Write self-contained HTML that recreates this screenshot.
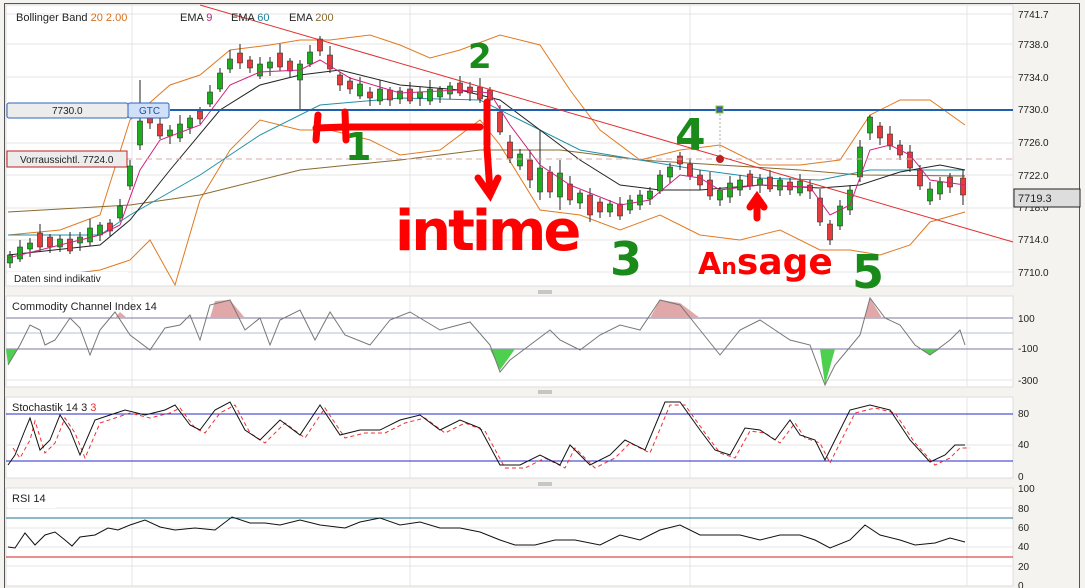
<!DOCTYPE html>
<html><head><meta charset="utf-8">
<style>
body{margin:0;background:#f4f3ef;width:1085px;height:588px;overflow:hidden;font-family:"Liberation Sans",sans-serif}
svg{display:block}
</style></head><body>
<svg width="1085" height="588" viewBox="0 0 1085 588" xmlns="http://www.w3.org/2000/svg" font-family="Liberation Sans, sans-serif">
<rect width="1085" height="588" fill="#f4f3ef"/>
<line x1="4.5" y1="3" x2="4.5" y2="588" stroke="#555"/>
<line x1="4" y1="3.5" x2="1080" y2="3.5" stroke="#555"/>
<line x1="1079.5" y1="3" x2="1079.5" y2="588" stroke="#555"/>
<rect x="6" y="5" width="1007" height="281" fill="#fff" stroke="#dcdcdc"/>
<rect x="6" y="296" width="1007" height="91" fill="#fff" stroke="#dcdcdc"/>
<rect x="6" y="397" width="1007" height="81" fill="#fff" stroke="#dcdcdc"/>
<rect x="6" y="488" width="1007" height="98" fill="#fff" stroke="#dcdcdc"/>
<g stroke="#e4e4e4">
<line x1="132" y1="5" x2="132" y2="286"/><line x1="410" y1="5" x2="410" y2="286"/><line x1="690" y1="5" x2="690" y2="286"/><line x1="967" y1="5" x2="967" y2="286"/>
<line x1="132" y1="296" x2="132" y2="387"/><line x1="410" y1="296" x2="410" y2="387"/><line x1="690" y1="296" x2="690" y2="387"/><line x1="967" y1="296" x2="967" y2="387"/>
<line x1="132" y1="397" x2="132" y2="478"/><line x1="410" y1="397" x2="410" y2="478"/><line x1="690" y1="397" x2="690" y2="478"/><line x1="967" y1="397" x2="967" y2="478"/>
<line x1="132" y1="488" x2="132" y2="586"/><line x1="410" y1="488" x2="410" y2="586"/><line x1="690" y1="488" x2="690" y2="586"/><line x1="967" y1="488" x2="967" y2="586"/>
<line x1="6" y1="14" x2="1013" y2="14"/><line x1="6" y1="44" x2="1013" y2="44"/><line x1="6" y1="77" x2="1013" y2="77"/><line x1="6" y1="143" x2="1013" y2="143"/><line x1="6" y1="175" x2="1013" y2="175"/><line x1="6" y1="208" x2="1013" y2="208"/><line x1="6" y1="240" x2="1013" y2="240"/><line x1="6" y1="272" x2="1013" y2="272"/>
<line x1="6" y1="380" x2="1013" y2="380"/>
<line x1="6" y1="445" x2="1013" y2="445"/>
<line x1="6" y1="508" x2="1013" y2="508"/><line x1="6" y1="528" x2="1013" y2="528"/><line x1="6" y1="547" x2="1013" y2="547"/><line x1="6" y1="566" x2="1013" y2="566"/>
</g>
<g stroke="#999"><line x1="538" y1="291" x2="552" y2="291"/><line x1="538" y1="293" x2="552" y2="293"/><line x1="538" y1="391" x2="552" y2="391"/><line x1="538" y1="393" x2="552" y2="393"/><line x1="538" y1="483" x2="552" y2="483"/><line x1="538" y1="485" x2="552" y2="485"/></g>
<g font-size="10" fill="#222">
<text x="1018" y="18">7741.7</text><text x="1018" y="48">7738.0</text><text x="1018" y="81">7734.0</text><text x="1018" y="113">7730.0</text><text x="1018" y="146">7726.0</text><text x="1018" y="179">7722.0</text><text x="1018" y="211">7718.0</text><text x="1018" y="243">7714.0</text><text x="1018" y="276">7710.0</text>
<text x="1018" y="322">100</text><text x="1018" y="352">-100</text><text x="1018" y="384">-300</text>
<text x="1018" y="417">80</text><text x="1018" y="448">40</text><text x="1018" y="480">0</text>
<text x="1018" y="492">100</text><text x="1018" y="512">80</text><text x="1018" y="531">60</text><text x="1018" y="550">40</text><text x="1018" y="570">20</text><text x="1018" y="589">0</text>
</g>
<rect x="1014" y="189" width="66" height="18" fill="#ddd" stroke="#222"/>
<text x="1018" y="202" font-size="11" fill="#222">7719.3</text>

<g fill="none" stroke-width="1">
<polyline stroke="#e07a20" points="8,235 60,230 100,215 130,120 170,85 200,75 230,50 270,45 300,40 330,40 370,35 400,45 430,58 460,50 500,35 540,45 570,90 600,130 640,160 680,150 720,145 760,165 800,165 840,160 870,115 900,100 930,100 965,125"/>
<polyline stroke="#e07a20" points="8,275 60,275 100,270 130,260 150,240 175,285 200,200 230,150 260,120 300,130 330,130 370,140 400,155 440,150 480,120 500,145 540,210 580,215 620,230 660,215 700,235 740,240 780,230 820,250 850,250 880,255 910,245 930,222 965,212"/>
<polyline stroke="#8a6a30" points="8,212 130,205 200,195 300,170 400,160 480,150 560,150 640,160 720,165 800,170 860,175 965,176"/>
<polyline stroke="#2090a8" points="8,235 100,235 130,215 200,175 260,135 320,105 400,98 480,100 520,120 580,150 640,160 700,170 760,178 820,180 870,170 920,170 965,170"/>
<polyline stroke="#222" points="8,255 100,245 130,220 170,170 220,110 260,85 300,75 340,70 400,85 460,90 500,100 540,130 580,160 620,185 660,190 700,190 760,185 820,188 860,185 900,172 940,165 965,170"/>
</g>
<path stroke="#222" fill="none" d="M10 251V268M20 240V262M30 238V257M40 224V251M50 234V253M60 235V252M70 232V254M80 232V251M90 219V246M100 222V241M110 219V236M120 199V221M130 160V190M140 80V150M150 110V129M160 117V139M170 125V144M180 115V142M190 115V134M200 107V124M210 85V107M220 68V92M230 50V73M240 44V69M250 56V73M260 57V79M270 57V76M280 44V71M290 58V77M300 60V110M310 45V67M320 36V56M330 46V73M340 72V91M350 77V94M360 77V99M370 87V106M380 80V105M390 87V106M400 87V104M410 82V104M420 87V106M430 80V105M440 86V103M450 82V99M460 76V96M470 82V101M480 78V103M490 87V106M500 105V135M510 135V163M520 149V170M530 150V188M540 130V200M550 166V198M560 160V210M570 176V205M580 190V209M590 188V222M600 198V218M610 200V217M620 197V220M630 195V214M640 190V210M650 187V205M660 170V194M670 163V183M680 152V170M690 158V180M700 170V190M710 172V200M720 187V206M730 176V203M740 175V196M750 170V190M760 174V193M770 170V192M780 177V196M790 178V195M800 174V196M810 180V199M820 189V226M830 220V245M840 200V230M850 185V215M860 140V182M870 115V140M880 122V145M890 126V150M900 140V160M910 145V172M920 165V190M930 182V205M940 177V200M950 173V193M963 170V205"/>
<path fill="#1cae1c" stroke="#222" stroke-width="0.6" d="M7.5 255h5v8h-5zM17.5 247h5v12h-5zM27.5 243h5v6h-5zM57.5 239h5v8h-5zM77.5 237h5v6h-5zM87.5 228h5v14h-5zM97.5 225h5v10h-5zM117.5 206h5v12h-5zM127.5 166h5v20h-5zM137.5 121h5v24h-5zM167.5 130h5v6h-5zM177.5 124h5v14h-5zM187.5 118h5v10h-5zM207.5 92h5v12h-5zM217.5 73h5v16h-5zM227.5 59h5v10h-5zM257.5 64h5v12h-5zM267.5 62h5v6h-5zM297.5 64h5v16h-5zM307.5 52h5v12h-5zM357.5 84h5v12h-5zM377.5 89h5v12h-5zM397.5 91h5v8h-5zM417.5 92h5v6h-5zM427.5 89h5v12h-5zM437.5 89h5v8h-5zM447.5 86h5v8h-5zM517.5 154h5v12h-5zM537.5 168h5v24h-5zM557.5 173h5v24h-5zM577.5 193h5v10h-5zM607.5 204h5v8h-5zM627.5 200h5v10h-5zM637.5 195h5v10h-5zM647.5 191h5v8h-5zM657.5 175h5v16h-5zM667.5 167h5v10h-5zM717.5 190h5v10h-5zM727.5 183h5v14h-5zM737.5 180h5v10h-5zM757.5 179h5v6h-5zM777.5 180h5v10h-5zM797.5 181h5v12h-5zM837.5 206h5v20h-5zM847.5 190h5v20h-5zM857.5 147h5v30h-5zM867.5 117h5v16h-5zM927.5 189h5v12h-5zM937.5 182h5v12h-5z"/>
<path fill="#e83a3a" stroke="#222" stroke-width="0.6" d="M37.5 233h5v14h-5zM47.5 237h5v10h-5zM67.5 239h5v12h-5zM107.5 223h5v8h-5zM147.5 113h5v10h-5zM157.5 124h5v12h-5zM197.5 111h5v8h-5zM237.5 53h5v10h-5zM247.5 60h5v8h-5zM277.5 53h5v14h-5zM287.5 61h5v10h-5zM317.5 39h5v12h-5zM327.5 55h5v14h-5zM337.5 75h5v10h-5zM347.5 81h5v8h-5zM367.5 92h5v6h-5zM387.5 90h5v10h-5zM407.5 89h5v12h-5zM457.5 83h5v10h-5zM467.5 87h5v6h-5zM477.5 87h5v12h-5zM487.5 90h5v10h-5zM497.5 112h5v20h-5zM507.5 142h5v16h-5zM527.5 160h5v20h-5zM547.5 172h5v20h-5zM567.5 184h5v16h-5zM587.5 195h5v20h-5zM597.5 202h5v10h-5zM617.5 204h5v12h-5zM677.5 156h5v8h-5zM687.5 164h5v12h-5zM697.5 175h5v10h-5zM707.5 180h5v16h-5zM747.5 174h5v12h-5zM767.5 177h5v12h-5zM787.5 182h5v8h-5zM807.5 185h5v6h-5zM817.5 198h5v24h-5zM827.5 224h5v16h-5zM877.5 126h5v12h-5zM887.5 134h5v12h-5zM897.5 145h5v10h-5zM907.5 152h5v16h-5zM917.5 170h5v16h-5zM947.5 177h5v10h-5zM960.5 178h5v17h-5z"/>
<polyline fill="none" stroke="#d0207a" points="8,258 60,245 100,235 120,225 140,170 160,140 200,125 230,85 260,72 300,70 320,60 350,78 400,93 460,90 490,93 510,125 540,165 570,185 620,205 650,200 680,175 700,178 720,190 760,185 810,187 830,215 850,205 870,150 890,145 910,155 930,180 965,185"/>

<line x1="6" y1="159" x2="1013" y2="159" stroke="#d4a8a8" stroke-dasharray="6,4"/>
<line x1="170" y1="110" x2="1013" y2="110" stroke="#1f5fb0" stroke-width="2"/>
<line x1="200" y1="5" x2="1013" y2="242" stroke="#e03030" stroke-width="1"/>
<line x1="720" y1="110" x2="720" y2="159" stroke="#aaa" stroke-dasharray="2,2"/>
<rect x="716" y="106" width="7" height="7" fill="#3060c0" stroke="#9c0"/>
<circle cx="720" cy="159" r="4" fill="#c02020"/>
<rect x="7" y="103" width="121" height="15" rx="2" fill="#ececec" stroke="#2b63c0"/>
<rect x="128" y="103" width="41" height="15" rx="2" fill="#cfe0f8" stroke="#2b63c0"/>
<text x="52" y="114" font-size="10" fill="#222">7730.0</text>
<text x="139" y="114" font-size="10" fill="#2050a0">GTC</text>
<rect x="7" y="151" width="120" height="16" fill="#ececec" stroke="#c02020"/>
<text x="20" y="163" font-size="10" fill="#222">Vorraussichtl. 7724.0</text>

<text x="16" y="21" font-size="11" fill="#222">Bollinger Band <tspan fill="#d8701a">20  2.00</tspan></text>
<text x="180" y="21" font-size="11" fill="#222">EMA <tspan fill="#c0207a">9</tspan></text>
<text x="231" y="21" font-size="11" fill="#222">EMA <tspan fill="#1a7f9a">60</tspan></text>
<text x="289" y="21" font-size="11" fill="#222">EMA <tspan fill="#8a6a30">200</tspan></text>
<rect x="8" y="272" width="120" height="13" fill="#fff"/>
<text x="14" y="282" font-size="10" fill="#222">Daten sind indikativ</text>

<line x1="6" y1="318" x2="1013" y2="318" stroke="#7a7a9a"/><line x1="6" y1="333" x2="1013" y2="333" stroke="#b0c0d0"/><line x1="6" y1="349" x2="1013" y2="349" stroke="#7a7a9a"/>
<path fill="#e0a8a8" d="M115 318L120 312L127 318ZM210 318L215 301L230 300L245 318ZM650 318L660 300L680 303L700 318ZM865 318L870 298L882 318Z"/>
<path fill="#4fcf4f" d="M6 349L8 365L18 349ZM490 349L500 370L515 349ZM820 349L825 385L835 349ZM920 349L930 355L940 349Z"/>
<polyline fill="none" stroke="#777" points="8,365 20,345 30,325 40,330 45,345 55,340 70,318 80,328 90,355 100,330 115,312 130,335 150,350 165,328 180,325 190,315 200,340 210,305 230,300 245,330 260,318 270,345 280,320 300,310 315,340 330,312 345,335 370,345 390,320 410,312 440,330 470,322 490,345 500,372 510,360 530,345 550,330 560,340 580,350 600,335 620,325 640,330 660,300 680,305 700,330 720,355 740,330 760,320 790,340 810,345 825,385 835,365 860,335 870,298 885,318 900,325 915,345 930,355 950,340 960,330 965,345"/>
<text x="12" y="310" font-size="11" fill="#222">Commodity Channel Index  14</text>
<line x1="6" y1="414" x2="1013" y2="414" stroke="#2828c8"/><line x1="6" y1="461" x2="1013" y2="461" stroke="#2828c8"/>
<polyline fill="none" stroke="#f03030" stroke-dasharray="4,3" points="13,448 20,458 30,440 35,421 45,453 55,443 65,418 75,433 85,458 100,423 115,418 130,413 150,418 170,413 180,408 195,428 205,433 220,413 235,405 250,433 265,443 285,423 305,438 325,408 345,438 365,433 385,433 405,423 425,418 445,433 465,423 485,431 505,468 525,468 545,458 565,468 575,448 595,468 615,458 630,443 650,453 670,405 685,405 705,433 720,453 735,458 750,431 765,433 780,443 795,423 805,438 820,443 830,463 840,443 855,413 875,408 895,413 915,443 935,465 950,458 960,448 970,448"/>
<polyline fill="none" stroke="#111" points="8,465 15,455 25,430 30,418 40,450 50,440 60,415 70,430 80,455 95,420 110,415 125,410 145,415 165,410 175,405 190,425 200,430 215,410 230,402 245,430 260,440 280,420 300,435 320,405 340,435 360,430 380,430 400,420 420,415 440,430 460,420 480,428 500,465 520,465 540,455 560,465 570,445 590,465 610,455 625,440 645,450 665,402 680,402 700,430 715,450 730,455 745,428 760,430 775,440 790,420 800,435 815,440 825,460 835,440 850,410 870,405 890,410 910,440 930,462 945,455 955,445 965,445"/>
<text x="12" y="411" font-size="11" fill="#222">Stochastik  14  3  <tspan fill="#e03030">3</tspan></text>
<line x1="6" y1="518" x2="1013" y2="518" stroke="#1a7090"/><line x1="6" y1="557" x2="1013" y2="557" stroke="#d02020"/>
<polyline fill="none" stroke="#111" points="8,547 15,548 25,533 35,545 45,535 55,532 65,540 72,546 80,537 95,535 108,528 118,530 130,525 145,520 160,527 175,530 195,528 215,530 232,517 250,523 265,523 280,525 300,520 320,525 345,528 360,522 380,518 400,525 420,522 440,528 460,528 480,532 500,540 515,545 535,545 555,540 575,540 600,545 620,535 640,540 660,530 680,525 700,535 720,535 740,535 760,540 780,535 800,535 815,540 830,548 850,540 865,525 880,535 900,540 915,545 935,543 950,538 965,542"/>
<rect x="8" y="490" width="48" height="18" fill="#fff"/>
<text x="12" y="502" font-size="11" fill="#222">RSI  14</text>

<g stroke="#f00" stroke-width="7" stroke-linecap="round" fill="none">
<path d="M318 115 L316 140 M316 128 L345 127 M345 112 L346 140 M346 127 L480 127 M487 102 L487 145"/>
<path d="M487 148 L490 192 M478 178 L490 195 L498 178"/>
<path d="M757 218 L757 198 M750 207 L757 197 L764 207"/>
</g>
<g font-weight="bold" font-family="DejaVu Sans, sans-serif">
<text x="395" y="250" font-size="56" fill="#f00" letter-spacing="-3">intime</text>
<text x="698" y="274" font-size="30" fill="#f00">A<tspan font-size="22">n</tspan><tspan font-size="36">sage</tspan></text>
<g fill="#1a8a1a">
<text x="345" y="160" font-size="38">1</text>
<text x="468" y="68" font-size="34">2</text>
<text x="610" y="275" font-size="46">3</text>
<text x="675" y="150" font-size="44">4</text>
<text x="852" y="288" font-size="46">5</text>
</g></g>
</svg>
</body></html>
